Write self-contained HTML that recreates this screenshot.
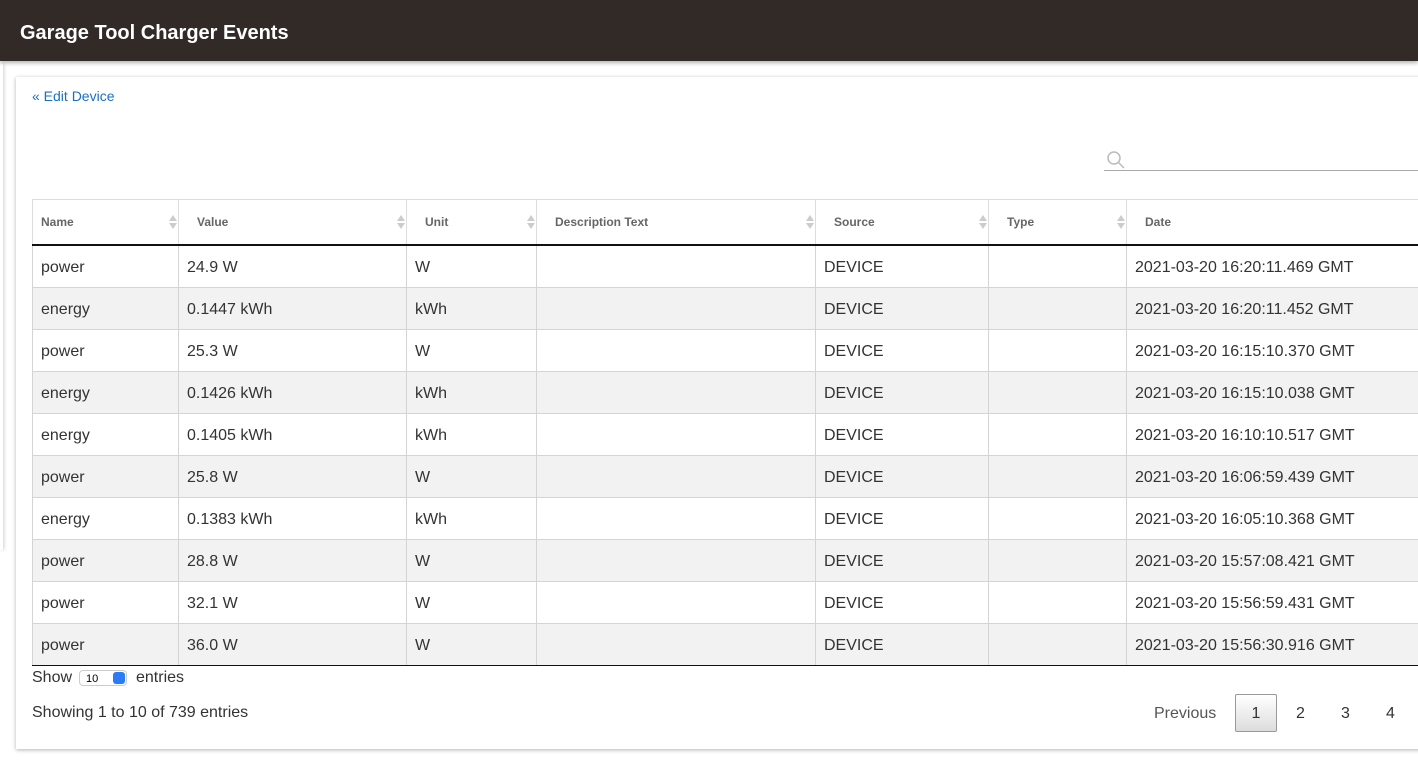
<!DOCTYPE html>
<html><head><style>
body{margin:0;width:1418px;height:763px;overflow:hidden;background:#fff;font-family:"Liberation Sans",sans-serif;position:relative}
.hdr{position:absolute;left:0;top:0;width:1418px;height:61px;background:#322a27;box-shadow:0 2px 4px rgba(0,0,0,.3)}
.hdr h1{margin:0;position:absolute;left:20px;top:22px;font-size:20px;color:#fff;font-weight:bold}
.side{position:absolute;left:0;top:64px;width:3px;height:486px;box-shadow:1px 0 3px rgba(0,0,0,.2)}
.card{position:absolute;left:16px;top:77px;width:1410px;height:672px;background:#fff;box-shadow:0 1px 4px rgba(0,0,0,.3)}
a{position:absolute;left:32px;top:88px;font-size:14px;color:#1a6fc4;text-decoration:none}
.search{position:absolute;left:1104px;top:146px;width:320px;height:24px;border-bottom:1px solid #aaa}
table{position:absolute;left:32px;top:199px;border-collapse:collapse;table-layout:fixed;width:1400px}
th{height:44px;font-size:12px;color:#666;text-align:left;border:1px solid #ddd;border-bottom:2px solid #111;padding:0 0 0 8px;position:relative}
th:nth-child(n+2){padding-left:18px}
th .s{position:absolute;right:5px;top:15px;width:0;height:0}
th .s:before{content:"";position:absolute;left:-4px;top:0;border:4px solid transparent;border-top:0;border-bottom:6px solid #ccc}
th .s:after{content:"";position:absolute;left:-4px;top:8px;border:4px solid transparent;border-bottom:0;border-top:6px solid #ccc}
td{height:39px;font-size:16px;color:#333;border:1px solid #d4d4d4;border-top:0;padding:2px 0 0 8px}
tr:nth-child(even) td{background:#f2f2f2}
tbody tr:last-child td{border-bottom:1px solid #111}
.f{position:absolute;font-size:16px;color:#333}
.sel{position:absolute;left:79px;top:670px;width:48px;height:16px;border:1px solid #ccc;border-radius:4px;font-size:11px;line-height:16px;padding-left:6px;box-sizing:border-box}
.sel i{position:absolute;right:1px;top:1px;width:12px;height:12px;background:#2a7bf5;border-radius:3px}
.pg{position:absolute;top:694px;font-size:16px;color:#333}
.cur{position:absolute;left:1235px;top:694px;width:42px;height:38px;border:1px solid #999;border-radius:2px;background:linear-gradient(#fff,#ddd);box-sizing:border-box;text-align:center;line-height:38px;font-size:16px;color:#333}
</style></head><body>
<div class="hdr"><h1>Garage Tool Charger Events</h1></div>
<div class="side"></div>
<div class="card"></div>
<a>« Edit Device</a>
<div class="search"><svg width="20" height="20" style="position:absolute;left:2px;top:4px"><circle cx="8" cy="8" r="6" fill="none" stroke="#bbb" stroke-width="1.5"/><line x1="12.5" y1="12.5" x2="18" y2="18" stroke="#bbb" stroke-width="1.5"/></svg></div>
<table>
<colgroup><col style="width:146px"><col style="width:228px"><col style="width:130px"><col style="width:279px"><col style="width:173px"><col style="width:138px"><col style="width:306px"></colgroup>
<thead><tr><th>Name<span class="s"></span></th><th>Value<span class="s"></span></th><th>Unit<span class="s"></span></th><th>Description Text<span class="s"></span></th><th>Source<span class="s"></span></th><th>Type<span class="s"></span></th><th>Date</th></tr></thead>
<tbody>
<tr><td>power</td><td>24.9 W</td><td>W</td><td></td><td>DEVICE</td><td></td><td>2021-03-20 16:20:11.469 GMT</td></tr>
<tr><td>energy</td><td>0.1447 kWh</td><td>kWh</td><td></td><td>DEVICE</td><td></td><td>2021-03-20 16:20:11.452 GMT</td></tr>
<tr><td>power</td><td>25.3 W</td><td>W</td><td></td><td>DEVICE</td><td></td><td>2021-03-20 16:15:10.370 GMT</td></tr>
<tr><td>energy</td><td>0.1426 kWh</td><td>kWh</td><td></td><td>DEVICE</td><td></td><td>2021-03-20 16:15:10.038 GMT</td></tr>
<tr><td>energy</td><td>0.1405 kWh</td><td>kWh</td><td></td><td>DEVICE</td><td></td><td>2021-03-20 16:10:10.517 GMT</td></tr>
<tr><td>power</td><td>25.8 W</td><td>W</td><td></td><td>DEVICE</td><td></td><td>2021-03-20 16:06:59.439 GMT</td></tr>
<tr><td>energy</td><td>0.1383 kWh</td><td>kWh</td><td></td><td>DEVICE</td><td></td><td>2021-03-20 16:05:10.368 GMT</td></tr>
<tr><td>power</td><td>28.8 W</td><td>W</td><td></td><td>DEVICE</td><td></td><td>2021-03-20 15:57:08.421 GMT</td></tr>
<tr><td>power</td><td>32.1 W</td><td>W</td><td></td><td>DEVICE</td><td></td><td>2021-03-20 15:56:59.431 GMT</td></tr>
<tr><td>power</td><td>36.0 W</td><td>W</td><td></td><td>DEVICE</td><td></td><td>2021-03-20 15:56:30.916 GMT</td></tr>
</tbody></table>
<div class="f" style="left:32px;top:669px">Show</div>
<div class="sel">10<i></i></div>
<div class="f" style="left:136px;top:669px">entries</div>
<div class="f" style="left:32px;top:704px">Showing 1 to 10 of 739 entries</div>
<div class="pg" style="left:1154px;top:705px;color:#555">Previous</div>
<div class="cur">1</div>
<div class="pg" style="left:1296px;top:705px">2</div>
<div class="pg" style="left:1341px;top:705px">3</div>
<div class="pg" style="left:1386px;top:705px">4</div>
</body></html>
